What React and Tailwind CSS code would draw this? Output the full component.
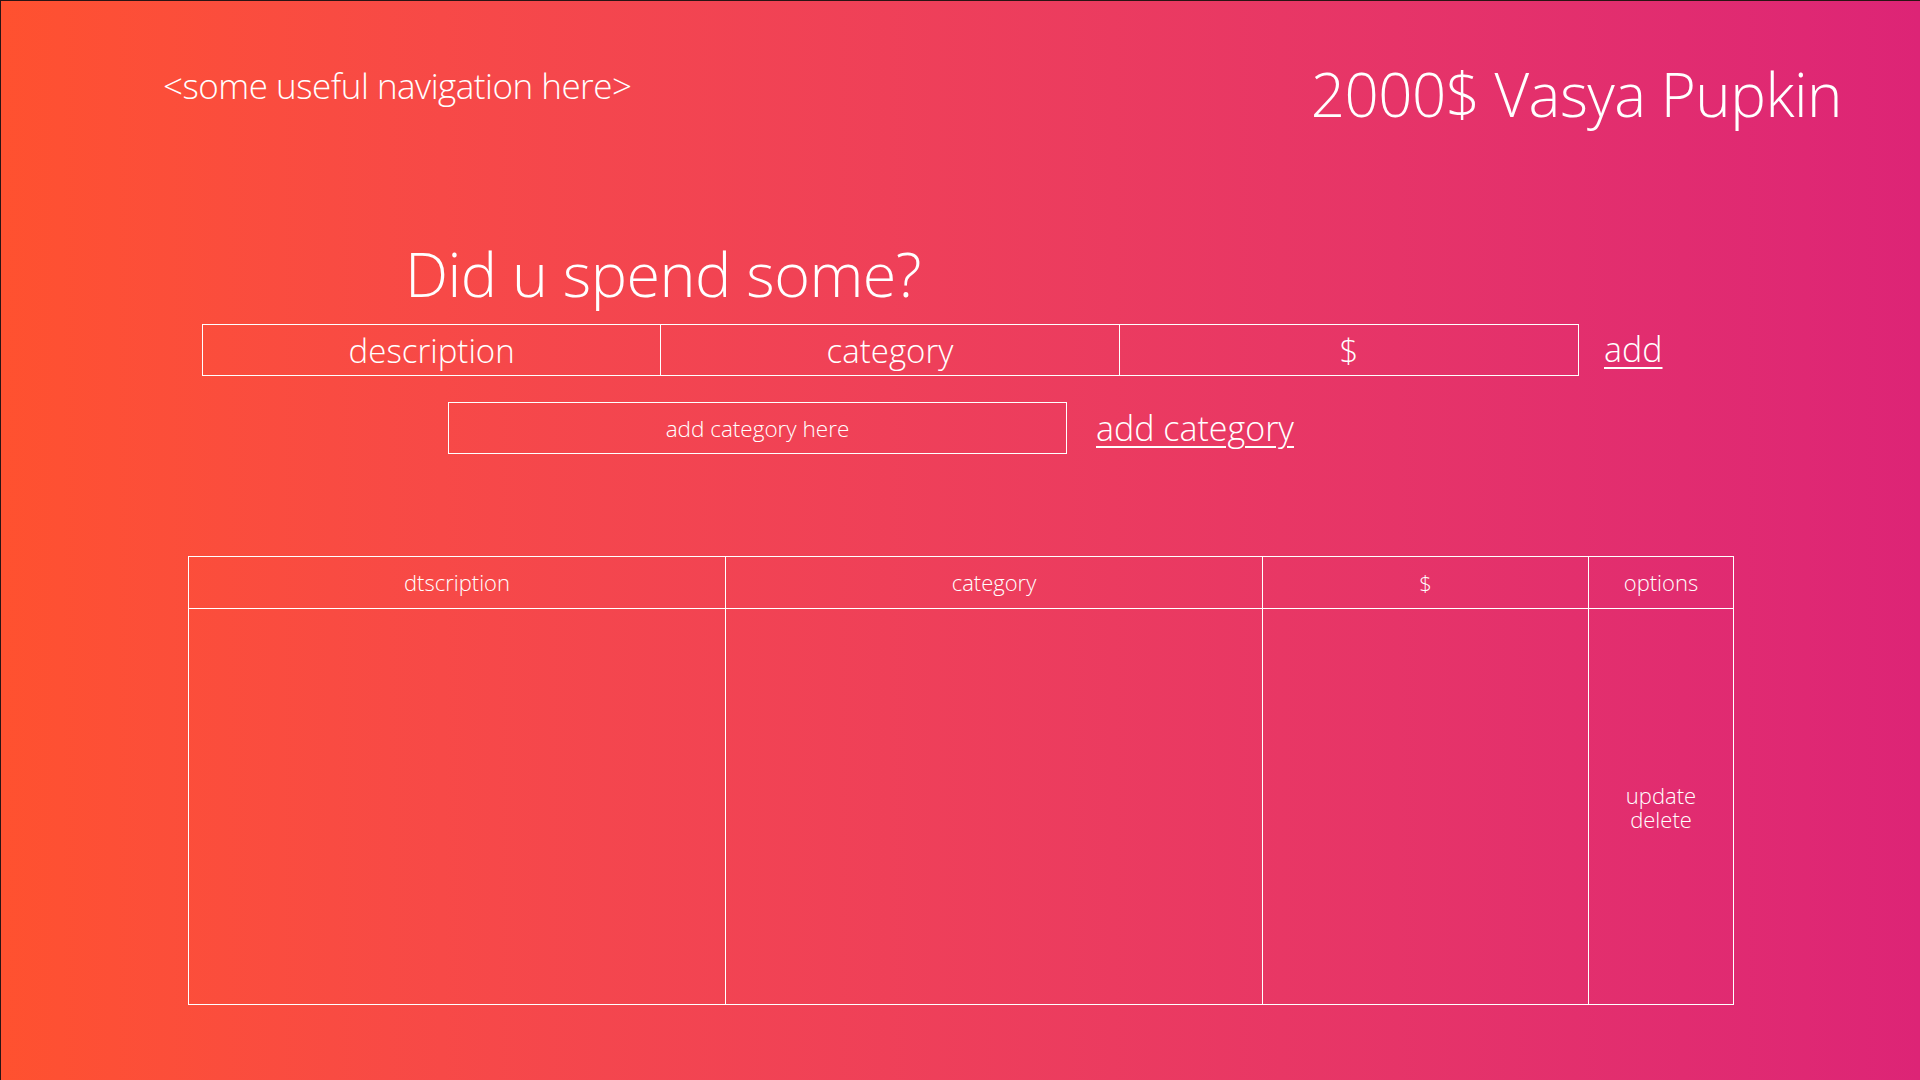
export default function App() {
  const font = { fontFamily: '"Open Sans", "Noto Sans", sans-serif' };
  return (
    <div
      className="w-full h-[1080px] overflow-hidden bg-gradient-to-r from-[#FF512F] to-[#DD2476] text-white font-light border-t border-l border-[#2a1414] flex flex-col"
      style={font}
    >
      <header className="flex justify-between items-start pl-[162px] pr-[78px]">
        <div className="mt-[64px] text-[35px] leading-[42px] tracking-[-0.5px]">&lt;some useful navigation here&gt;</div>
        <div className="mt-[56px] text-[60px] leading-[74px] tracking-[-0.5px]">2000$ Vasya Pupkin</div>
      </header>

      <h1 className="mt-[106px] ml-[404px] text-[61px] leading-[74px] tracking-[-0.5px]">Did u spend some?</h1>

      <div className="mt-[13px] ml-[201px] flex items-center">
        <div className="flex w-[1377px] h-[52px] border border-white">
          <input className="w-1/3 h-full bg-transparent text-center text-[33px] outline-none placeholder:text-white border-r border-white" placeholder="description" />
          <input className="w-1/3 h-full bg-transparent text-center text-[33px] outline-none placeholder:text-white border-r border-white" placeholder="category" />
          <input className="w-1/3 h-full bg-transparent text-center text-[33px] outline-none placeholder:text-white" placeholder="$" />
        </div>
        <a className="ml-[25px] text-[34px] leading-[44px] underline underline-offset-[5px] decoration-[2px] -mt-[2px]" href="#">add</a>
      </div>

      <div className="mt-[26px] ml-[447px] flex items-center">
        <input className="w-[619px] h-[52px] border border-white bg-transparent text-center text-[22.5px] outline-none placeholder:text-white" placeholder="add category here" />
        <a className="ml-[29px] text-[34px] leading-[44px] underline underline-offset-[5px] decoration-[2px]" href="#">add category</a>
      </div>

      <table className="mt-[102px] ml-[187px] w-[1545px] h-[449px] border-collapse table-fixed text-[22px]">
        <colgroup>
          <col className="w-[537px]" />
          <col className="w-[537px]" />
          <col className="w-[326px]" />
          <col className="w-[145px]" />
        </colgroup>
        <thead>
          <tr className="h-[52px]">
            <th className="border border-white font-light">dtscription</th>
            <th className="border border-white font-light">category</th>
            <th className="border border-white font-light">$</th>
            <th className="border border-white font-light">options</th>
          </tr>
        </thead>
        <tbody>
          <tr>
            <td className="border border-white"></td>
            <td className="border border-white"></td>
            <td className="border border-white"></td>
            <td className="border border-white text-center leading-[24px]">
              <div>update</div>
              <div>delete</div>
            </td>
          </tr>
        </tbody>
      </table>
    </div>
  );
}
